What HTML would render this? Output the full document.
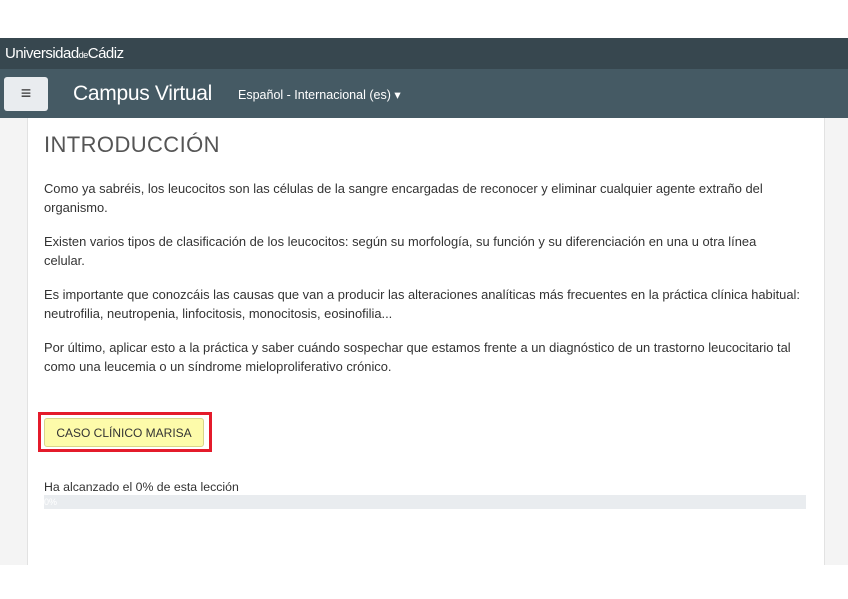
<!DOCTYPE html>
<html><head><meta charset="utf-8"><style>
body{margin:0;width:848px;height:599px;position:relative;background:#fff;font-family:"Liberation Sans",sans-serif;overflow:hidden}
.top{position:absolute;top:38px;left:0;width:848px;height:31px;background:#37474f;color:#fff;font-size:15px;line-height:31px;padding-left:5px;box-sizing:border-box;letter-spacing:-0.5px}
.nav{position:absolute;top:69px;left:0;width:848px;height:49px;background:#455a64;color:#fff}
.btn{position:absolute;left:4px;top:77px;width:44px;height:34px;background:#e9ecef;border-radius:3px;color:#333;font-size:18px;text-align:center;line-height:33px}
.brand{position:absolute;left:73px;top:82px;font-size:21px;color:#fff;letter-spacing:-0.3px}
.lang{position:absolute;left:238px;top:87px;font-size:12.5px;color:#fff}
.bg{position:absolute;top:118px;left:0;width:848px;height:447px;background:#f4f4f4}
.card{position:absolute;top:118px;left:27px;width:796px;height:447px;background:#fff;border-left:1px solid #e2e2e2;border-right:1px solid #e2e2e2}
h1{position:absolute;left:44px;top:132px;margin:0;font-weight:normal;font-size:22px;color:#555;letter-spacing:0.4px}
p{position:absolute;left:44px;margin:0;font-size:12.9px;line-height:19px;color:#333;white-space:nowrap}
.red{position:absolute;left:38px;top:412px;width:168px;height:34px;border:3px solid #e41b2b}
.case{position:absolute;left:44px;top:418px;width:160px;height:29px;background:#fdfbaa;border:1px solid #d8d48a;border-radius:3px;box-sizing:border-box;font-size:12px;color:#333;text-align:center;line-height:28px}
.prog{position:absolute;left:44px;top:495px;width:762px;height:14px;background:#e9ecef;color:#fff;font-size:9px;line-height:14px}
</style></head><body>
<div class="top">Universidad<span style="font-size:9px">de</span>Cádiz</div>
<div class="nav"></div>
<div class="btn">≡</div>
<div class="brand">Campus Virtual</div>
<div class="lang">Español - Internacional (es) ▾</div>
<div class="bg"></div>
<div class="card"></div>
<h1>INTRODUCCIÓN</h1>
<p style="top:179px">Como ya sabréis, los leucocitos son las células de la sangre encargadas de reconocer y eliminar cualquier agente extraño del<br>organismo.</p>
<p style="top:232px">Existen varios tipos de clasificación de los leucocitos: según su morfología, su función y su diferenciación en una u otra línea<br>celular.</p>
<p style="top:285px">Es importante que conozcáis las causas que van a producir las alteraciones analíticas más frecuentes en la práctica clínica habitual:<br>neutrofilia, neutropenia, linfocitosis, monocitosis, eosinofilia...</p>
<p style="top:338px">Por último, aplicar esto a la práctica y saber cuándo sospechar que estamos frente a un diagnóstico de un trastorno leucocitario tal<br>como una leucemia o un síndrome mieloproliferativo crónico.</p>
<div class="red"></div>
<div class="case">CASO CLÍNICO MARISA</div>
<p style="top:478px;font-size:12.3px">Ha alcanzado el 0% de esta lección</p>
<div class="prog">0%</div>
</body></html>
